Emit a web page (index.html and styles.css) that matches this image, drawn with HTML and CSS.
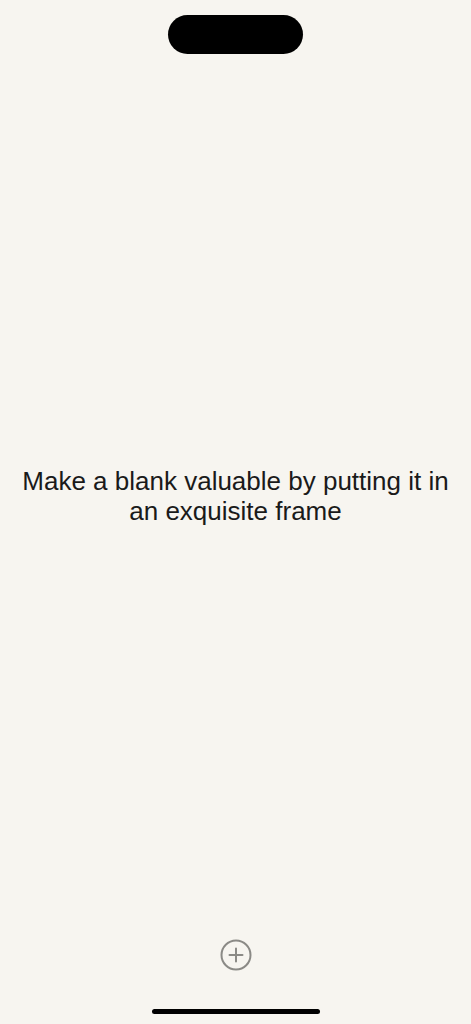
FILE: index.html
```html
<!DOCTYPE html>
<html lang="en">
<head>
<meta charset="utf-8">
<title>Frame</title>
<link rel="stylesheet" href="styles.css">
</head>
<body>
<div class="screen">
  <div class="island"></div>
  <main class="content">
    <p class="message">Make a blank valuable by putting it in an exquisite frame</p>
  </main>
  <button class="add-btn" aria-label="Add">
    <svg width="32" height="32" viewBox="0 0 32 32" fill="none" stroke="#8b8a86" stroke-width="2" stroke-linecap="round">
      <circle cx="16" cy="16" r="14.5"/>
      <path d="M16 9.5v13M9.5 16h13"/>
    </svg>
  </button>
  <div class="home-indicator"></div>
</div>
</body>
</html>
```

FILE: styles.css
```css
html, body {
  margin: 0;
  padding: 0;
  background: #f7f5f0;
}

.screen {
  width: 471px;
  height: 1024px;
  display: flex;
  flex-direction: column;
  align-items: center;
  font-family: "Liberation Sans", Arial, sans-serif;
  color: #1a1a1a;
  overflow: hidden;
}

.island {
  margin-top: 15px;
  width: 135px;
  height: 39px;
  border-radius: 20px;
  background: #000;
  flex: none;
}

.content {
  margin-top: 412px;
  flex: 1;
  width: 100%;
  display: flex;
  justify-content: center;
}

.message {
  margin: 0;
  width: 440px;
  font-size: 26px;
  line-height: 30px;
  text-align: center;
  letter-spacing: 0;
}

.add-btn {
  width: 32px;
  height: 32px;
  padding: 0;
  border: 0;
  background: none;
  display: block;
  flex: none;
}

.add-btn svg {
  display: block;
}

.home-indicator {
  margin-top: 38px;
  margin-bottom: 10px;
  width: 168px;
  height: 5px;
  border-radius: 3px;
  background: #000;
  flex: none;
}
```
